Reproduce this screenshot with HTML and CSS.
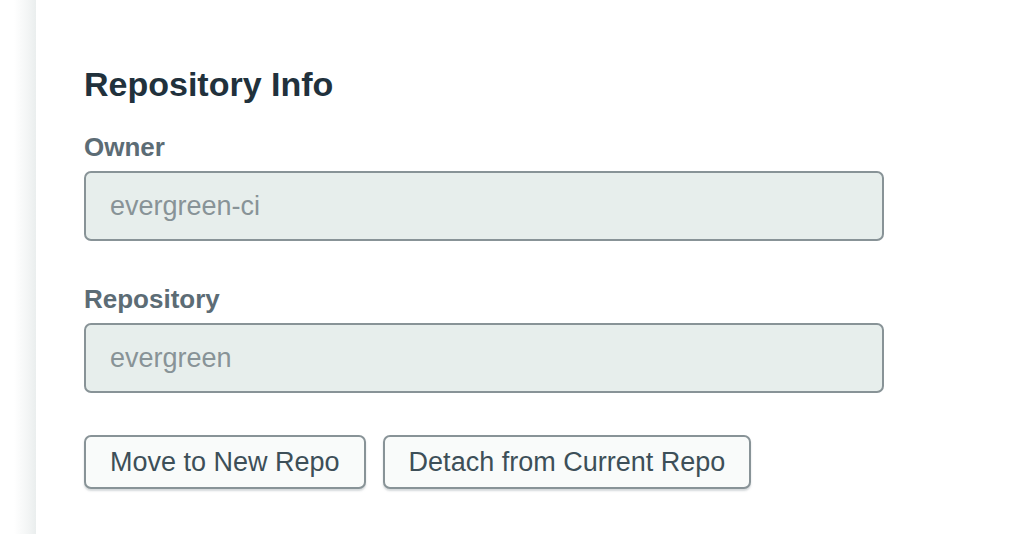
FILE: index.html
```html
<!DOCTYPE html>
<html lang="en">
<head>
<meta charset="utf-8">
<title>Repository Info</title>
<link rel="stylesheet" href="styles.css">
</head>
<body>
<div class="layout">
  <div class="gutter"></div>
  <main class="panel">
    <h2 class="title">Repository Info</h2>
    <div class="field">
      <label class="label" for="owner">Owner</label>
      <input class="input" id="owner" type="text" value="evergreen-ci" readonly>
    </div>
    <div class="field">
      <label class="label" for="repo">Repository</label>
      <input class="input" id="repo" type="text" value="evergreen" readonly>
    </div>
    <div class="actions">
      <button class="btn" type="button">Move to New Repo</button>
      <button class="btn" type="button">Detach from Current Repo</button>
    </div>
  </main>
</div>
</body>
</html>
```

FILE: styles.css
```css
html, body {
  margin: 0;
  padding: 0;
  background: #ffffff;
  font-family: "Liberation Sans", Arial, sans-serif;
  height: 100%;
}

.layout {
  display: flex;
  min-height: 534px;
}

.gutter {
  width: 36px;
  flex: 0 0 36px;
  background: linear-gradient(to right, #ffffff 0px, #ffffff 14px, #f3f5f5 28px, #eaeeee 36px);
}

.panel {
  flex: 1;
  padding: 64px 0 0 48px;
  background: #ffffff;
}

.title {
  margin: 0 0 27px;
  font-size: 34px;
  line-height: 40px;
  font-weight: 700;
  color: #21313c;
}

.field {
  display: flex;
  flex-direction: column;
  gap: 8px;
  margin-bottom: 42px;
}

.field:last-of-type {
  margin-bottom: 41px;
}

.label {
  font-size: 26px;
  line-height: 32px;
  font-weight: 700;
  color: #5c6c75;
}

.input {
  box-sizing: border-box;
  width: 800px;
  height: 70px;
  margin: 0;
  padding: 0 24px;
  border: 2px solid #889397;
  border-radius: 7px;
  background: #e7eeec;
  font-family: "Liberation Sans", Arial, sans-serif;
  font-size: 27px;
  color: #889397;
  outline: none;
}

.actions {
  display: flex;
  gap: 17px;
}

.btn {
  box-sizing: border-box;
  height: 54px;
  margin: 0;
  padding: 0 24px;
  border: 2px solid #889397;
  border-radius: 7px;
  background: #f9fbfa;
  box-shadow: 0 2px 2px rgba(136, 147, 151, 0.35);
  font-family: "Liberation Sans", Arial, sans-serif;
  font-size: 27px;
  color: #3d4f58;
  cursor: pointer;
}
```
